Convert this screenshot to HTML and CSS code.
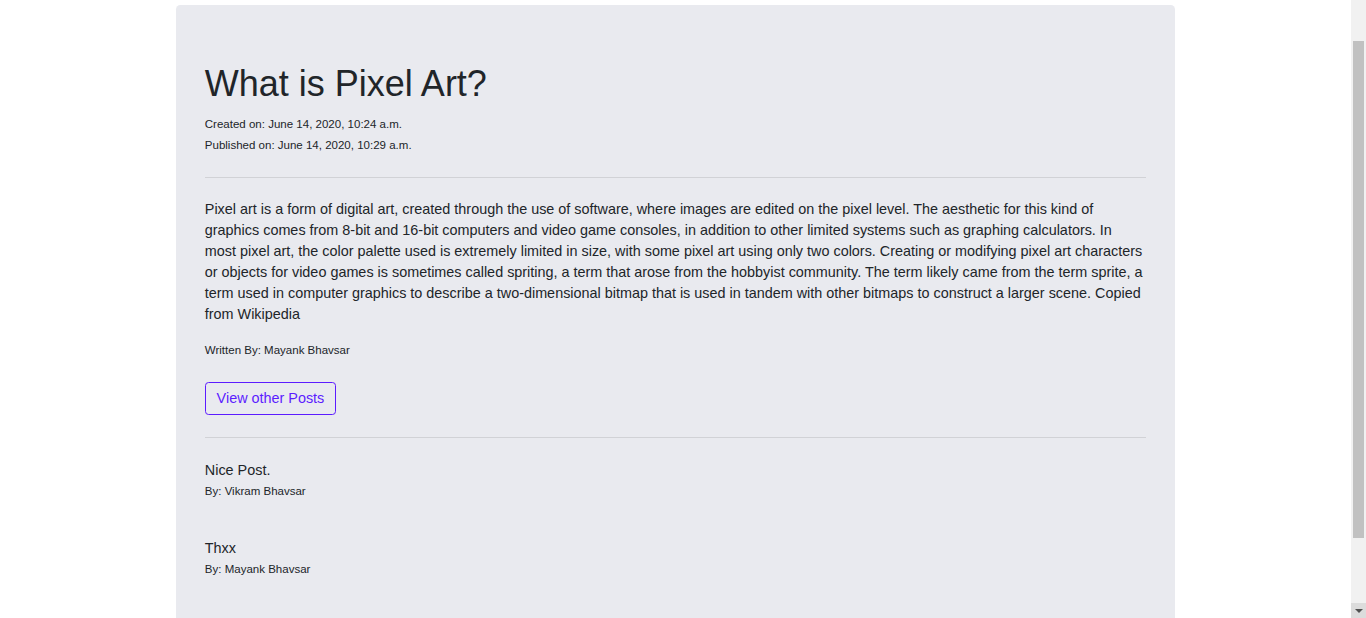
FILE: index.html
```html
<!DOCTYPE html>
<html lang="en">
<head>
<meta charset="utf-8">
<title>What is Pixel Art?</title>
<link rel="stylesheet" href="styles.css">
</head>
<body>
<main class="container">
  <section class="jumbotron">
    <h1 class="title">What is Pixel Art?</h1>
    <p class="meta">
      <small>Created on: June 14, 2020, 10:24 a.m.</small><br>
      <small>Published on: June 14, 2020, 10:29 a.m.</small>
    </p>
    <hr class="divider divider-top">
    <p class="content">Pixel art is a form of digital art, created through the use of software, where images are edited on the pixel level. The aesthetic for this kind of graphics comes from 8-bit and 16-bit computers and video game consoles, in addition to other limited systems such as graphing calculators. In most pixel art, the color palette used is extremely limited in size, with some pixel art using only two colors. Creating or modifying pixel art characters or objects for video games is sometimes called spriting, a term that arose from the hobbyist community. The term likely came from the term sprite, a term used in computer graphics to describe a two-dimensional bitmap that is used in tandem with other bitmaps to construct a larger scene. Copied from Wikipedia</p>
    <p class="author"><small>Written By: Mayank Bhavsar</small></p>
    <a class="btn-outline" href="#">View other Posts</a>
    <hr class="divider">
    <div class="comment">
      <p class="comment-text">Nice Post.</p>
      <p class="comment-by"><small>By: Vikram Bhavsar</small></p>
    </div>
    <div class="comment">
      <p class="comment-text">Thxx</p>
      <p class="comment-by"><small>By: Mayank Bhavsar</small></p>
    </div>
  </section>
</main>
<div class="scrollbar" aria-hidden="true">
  <div class="scroll-thumb"></div>
  <div class="scroll-down"><span class="arrow"></span></div>
</div>
</body>
</html>
```
FILE: styles.css
```css
html {
  font-size: 14.4px;
}
body {
  margin: 0 15px 0 0;
  padding-top: 5px;
  font-family: "Liberation Sans", Arial, sans-serif;
  font-size: 1rem;
  line-height: 21px;
  color: #212529;
  background: #fff;
}
.container {
  width: 999px;
  margin: 0 auto;
}
.jumbotron {
  background: #e9eaef;
  border-radius: 4.3px;
  padding: 56.6px 28.8px 57.6px;
  margin-bottom: 28.8px;
}
.title {
  font-size: 36px;
  font-weight: 400;
  line-height: 1.2;
  margin: 0 0 8.2px;
}
.meta {
  margin: 0;
  line-height: 20px;
}
small {
  font-size: 80%;
}
.divider {
  margin: 21.6px 0;
  border: 0;
  border-top: 1px solid rgba(0, 0, 0, 0.1);
}
.content {
  margin: 0 0 13.4px;
}
.author {
  margin: 0 0 21px;
}
.btn-outline {
  display: inline-block;
  color: #5c1cff;
  border: 1px solid #5c1cff;
  border-radius: 3.6px;
  padding: 5.4px 10.8px;
  line-height: 21px;
  text-decoration: none;
}
.comment {
  margin-bottom: 37px;
}
.comment-text {
  margin: 0;
}
.comment-by {
  margin: 0;
  line-height: 19px;
}
.scrollbar {
  position: fixed;
  top: 0;
  right: 0;
  width: 15px;
  height: 100vh;
  background: #f1f1f1;
}
.scroll-thumb {
  position: absolute;
  top: 41px;
  left: 2px;
  width: 11px;
  height: 497px;
  background: #c1c1c1;
}
.scroll-down {
  position: absolute;
  bottom: 0;
  left: 0;
  width: 15px;
  height: 15px;
  background: #dcdcdc;
  display: flex;
  align-items: center;
  justify-content: center;
}
.arrow {
  width: 0;
  height: 0;
  border-left: 4px solid transparent;
  border-right: 4px solid transparent;
  border-top: 4px solid #505050;
}
```
